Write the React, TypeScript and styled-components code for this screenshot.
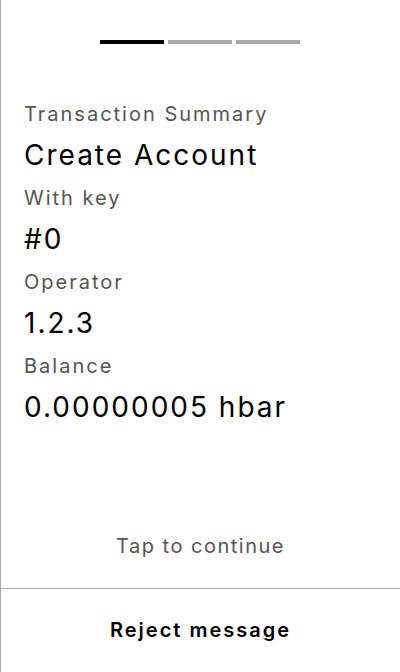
import React from 'react'
import styled, { createGlobalStyle } from 'styled-components'

const GlobalStyle = createGlobalStyle`
  html, body {
    margin: 0;
    padding: 0;
    background: #ffffff;
  }
  body {
    font-family: Inter, "Noto Sans", sans-serif;
  }
`

const Screen = styled.div`
  display: flex;
  flex-direction: column;
  box-sizing: border-box;
  width: 400px;
  height: 672px;
  border-left: 1px solid #aaaaaa;
  background: #ffffff;
`

const Progress = styled.div`
  display: flex;
  justify-content: center;
  gap: 4px;
  padding-top: 40px;
  padding-right: 1px;
`

const Segment = styled.div<{ active?: boolean }>`
  width: 64px;
  height: 4px;
  background: ${({ active }) => (active ? '#000000' : '#aaaaaa')};
`

const Summary = styled.div`
  display: flex;
  flex-direction: column;
  padding: 56px 23px 0;
`

const Label = styled.div`
  font-size: 20px;
  line-height: 28px;
  letter-spacing: 2px;
  color: #555555;
  margin-top: 11px;

  &:first-child {
    margin-top: 0;
  }
`

const Value = styled.div`
  font-size: 28px;
  line-height: 36px;
  letter-spacing: 2px;
  color: #000000;
  margin-top: 9px;
`

const Spacer = styled.div`
  flex: 1;
`

const Hint = styled.div`
  text-align: center;
  font-size: 20px;
  line-height: 28px;
  letter-spacing: 1.5px;
  color: #555555;
  margin-bottom: 28px;
`

const Footer = styled.button`
  display: flex;
  align-items: center;
  justify-content: center;
  height: 84px;
  border: none;
  border-top: 1px solid #aaaaaa;
  background: transparent;
  font-family: inherit;
  font-size: 20px;
  font-weight: 600;
  letter-spacing: 2px;
  color: #000000;
  padding: 0 0 2px;
`

const rows: [string, string][] = [
  ['Transaction Summary', 'Create Account'],
  ['With key', '#0'],
  ['Operator', '1.2.3'],
  ['Balance', '0.00000005 hbar'],
]

export default function App() {
  return (
    <>
      <GlobalStyle />
      <Screen>
        <Progress>
          <Segment active />
          <Segment />
          <Segment />
        </Progress>
        <Summary>
          {rows.map(([label, value]) => (
            <React.Fragment key={label}>
              <Label>{label}</Label>
              <Value>{value}</Value>
            </React.Fragment>
          ))}
        </Summary>
        <Spacer />
        <Hint>Tap to continue</Hint>
        <Footer>Reject message</Footer>
      </Screen>
    </>
  )
}
